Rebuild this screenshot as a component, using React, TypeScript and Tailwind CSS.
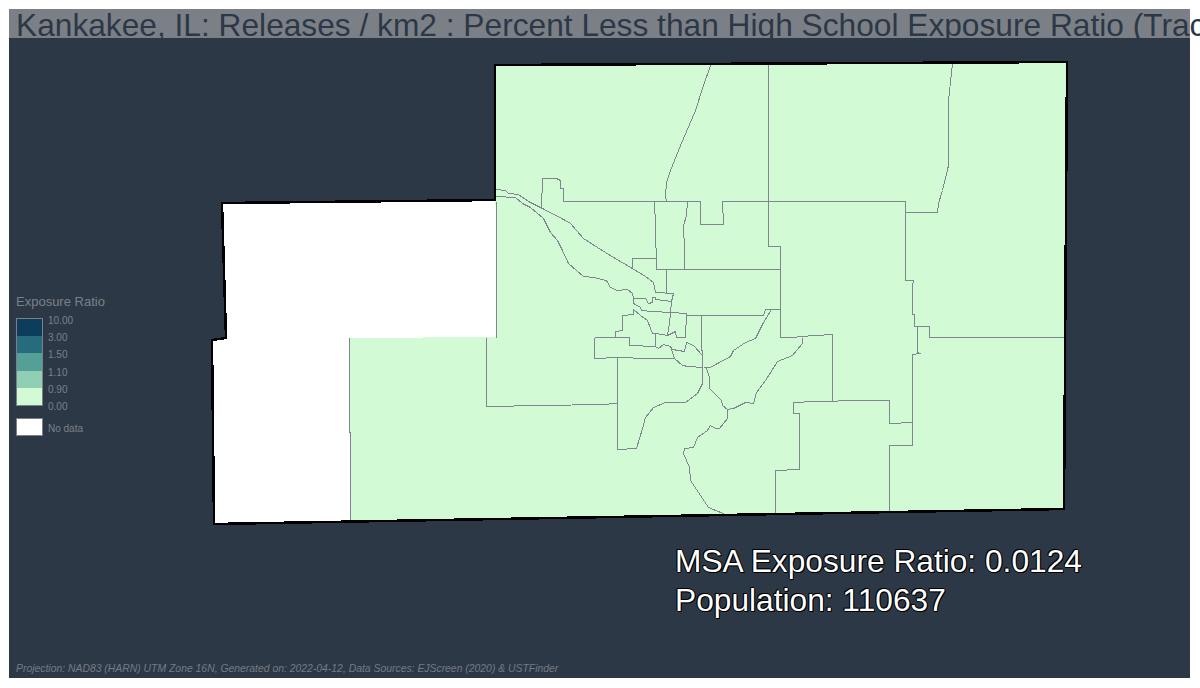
import React from 'react';

const legendRows = [
  { color: 'bg-[#0e3c5c]', label: '10.00' },
  { color: 'bg-[#266c7c]', label: '3.00' },
  { color: 'bg-[#549f98]', label: '1.50' },
  { color: 'bg-[#91cfb4]', label: '1.10' },
  { color: 'bg-[#d2fbd5]', label: '0.90' },
];

const legendLabels = [...legendRows.map(r => r.label), '0.00'];

// tract boundaries, in page pixels
const tractLines = [
  '710,65 703,85 695,110 680,145 670,170 666,182 665,195 666,201',
  '563,201 700,201 700,224 723,224 722,201 905,201',
  '768,64 768,246 780,246 780,337 793,337 800,336 832,334 832,401',
  '793,402 815,401 861,400 889,400 889,423 912,422',
  '793,402 793,413 799,413 799,469 775,470 775,514',
  '952,63 948,100 948,165 942,190 938,203 937,212 905,212 905,201',
  '905,212 905,280 913,280 912,285 912,314 914,314 914,326 929,326 929,337 1064,337',
  '914,326 917,326 917,352 919,353 912,354 912,445 889,445 889,512',
  '349,338 350,521',
  '496,201 496,337',
  '654,201 655,225 656,269 780,269',
  '687,201 686,215 683,225 684,250 684,269',
  '666,269 666,292',
  '632,268 632,258 656,258',
  '495,189 505,190 508,193 518,194 528,201 542,208 563,219 570,223 583,238 597,247 613,257 632,268 645,276 653,282 655,292',
  '495,196 515,197 522,203 530,207 543,218 550,232 557,240 562,250 568,263 583,276 593,277 606,280 610,287 617,290 627,289 632,293 633,298 645,298 648,303 652,302 652,297 655,297 655,299 671,301 673,293 655,292',
  '541,208 542,178 556,178 560,180 560,188 563,188 563,201',
  '633,298 633,303 640,307 641,310 652,311 670,312 671,302',
  '670,312 669,323 668,329 667,335 675,331 676,337 685,337 686,313 670,312',
  '686,315 763,315 765,309 780,309',
  '701,315 702,383 697,393 685,402 665,402 653,407 645,417 642,428 636,448 617,449 617,357',
  '486,337 486,406 600,404 617,403',
  '594,337 629,337 629,345 655,346 658,348 663,344 670,346 674,358 682,365 688,366 702,367',
  '594,337 594,358 617,357 648,358 674,358',
  '615,337 615,331 622,330 622,315 633,314 633,309 640,315 647,320 652,333 655,333 655,345',
  '655,333 667,335',
  '670,346 672,349 684,351 686,342 693,345 702,355 702,367',
  '703,367 710,367 717,363 730,356 733,350 745,342 755,338 763,322 771,309',
  '706,368 709,377 709,388 721,400 722,405 727,409 733,408 745,402 753,403 756,392 765,380 777,361 792,355 802,343 802,337',
  '727,409 727,418 719,428 715,428 710,425 707,430 697,437 693,447 684,448 683,453 689,467 690,480 700,495 708,507 725,514',
];

export default function App() {
  return (
    <div className="w-[1200px] h-[688px] overflow-hidden bg-white p-[9px] font-['Liberation_Sans',Arial,sans-serif]">
      <div className="relative flex flex-col w-[1181px] h-[669px] bg-[#2d3847]">
        <div className="h-[29px] shrink-0 bg-[#7b8087] pl-[7px] text-[31.7px] leading-[32px] text-[#2d3847] whitespace-nowrap overflow-y-clip">
          Kankakee, IL: Releases / km2 : Percent Less than High School Exposure Ratio (Tract)
        </div>

        <div className="relative flex-1 flex flex-col justify-end">
          <svg viewBox="9 38 1181 640" className="absolute left-0 top-0 w-[1181px] h-[640px]" shapeRendering="crispEdges">
            <polygon points="222,203 496,200 496,337 349,338 350,522 214,524 212,340 226,338" fill="#ffffff" />
            <polygon points="495,65 1067,62 1064,509 350,522 349,338 496,337" fill="#d2fbd5" />
            <g transform="translate(0.5 0.5)">
              {tractLines.map((points, i) => (
                <polyline key={i} points={points} fill="none" stroke="#808690" strokeWidth="1" />
              ))}
            </g>
            <polygon
              points="222,203 495,200 495,65 1067,62 1064,509 214,524 212,340 226,338"
              fill="none"
              stroke="#000000"
              strokeWidth="2.5"
            />
          </svg>

          <div className="absolute left-[7px] top-[257px] text-[#7b8087]">
            <div className="text-[13px] leading-[14px]">Exposure Ratio</div>
            <div className="flex items-start mt-[9px]">
              <div className="flex flex-col w-[27px] border border-[#7b8087]">
                {legendRows.map(row => (
                  <div key={row.label} className={`h-[17.2px] ${row.color}`} />
                ))}
              </div>
              <div className="flex flex-col ml-[5px] -mt-[6px] h-[87px]">
                {legendLabels.map(label => (
                  <div key={label} className="h-[17.2px] shrink-0 text-[10px] leading-[17px]">{label}</div>
                ))}
              </div>
            </div>
            <div className="flex items-center mt-[12px]">
              <div className="w-[27px] h-[18px] bg-white border border-[#7b8087]" />
              <div className="ml-[5px] pt-[2px] text-[10px] leading-[17px]">No data</div>
            </div>
          </div>

          <div className="relative ml-[666px] text-[31.7px] leading-[39px] text-white [text-shadow:1px_0_0_#000,-1px_0_0_#000,0_1px_0_#000,0_-1px_0_#000,1px_1px_0_#000,-1px_-1px_0_#000]">
            <div>MSA Exposure Ratio: 0.0124</div>
            <div>Population: 110637</div>
          </div>
          <div className="relative mt-[43px] mb-[3px] pl-[7px] text-[10.4px] leading-[12px] italic text-[#747b85]">
            Projection: NAD83 (HARN) UTM Zone 16N, Generated on: 2022-04-12, Data Sources: EJScreen (2020) &amp; USTFinder
          </div>
        </div>
      </div>
    </div>
  );
}
